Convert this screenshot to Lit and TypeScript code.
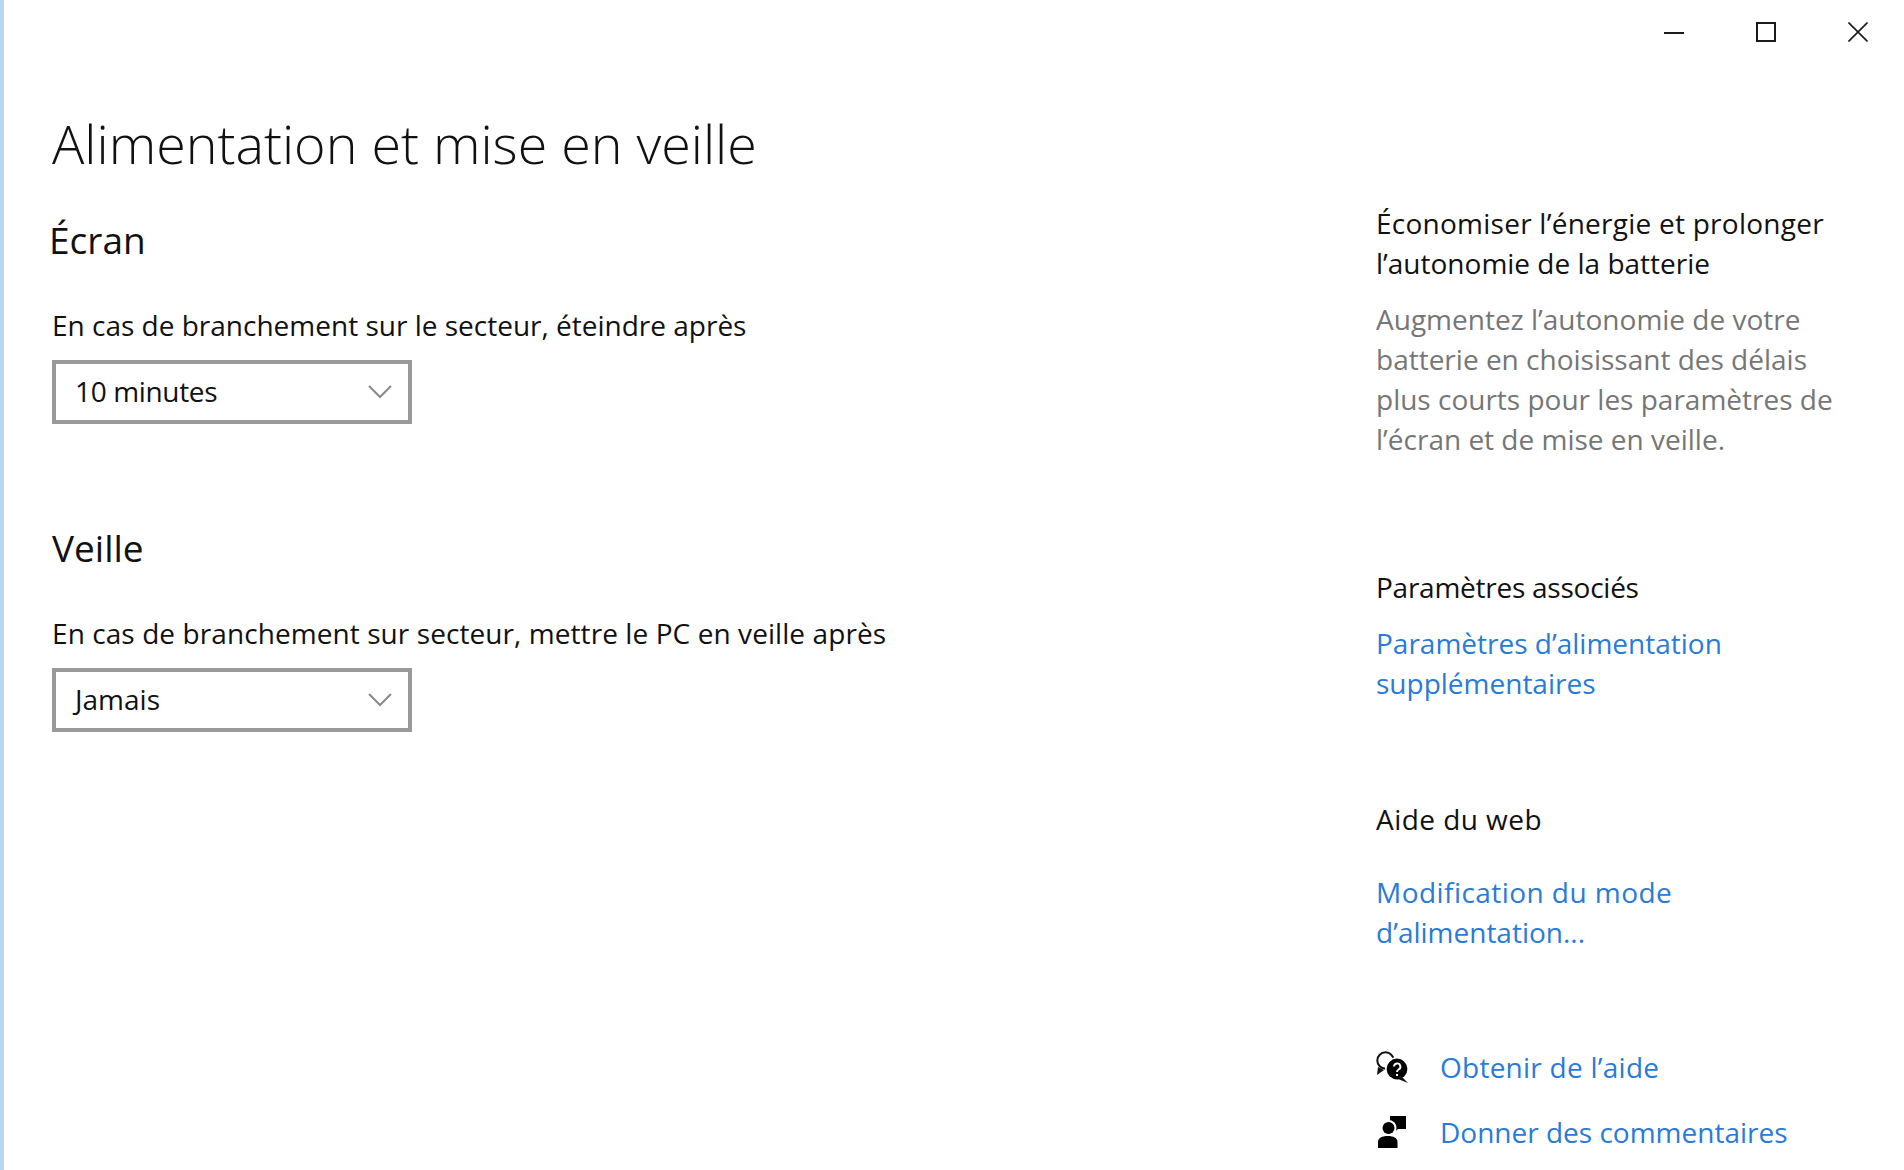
import { LitElement, html, css } from "lit";
import { customElement } from "lit/decorators.js";

@customElement("app-root")
export class AppRoot extends LitElement {
  static styles = css`
    :host {
      display: block;
      width: 1904px;
      height: 1170px;
      overflow: hidden;
      background: #fff;
      font-family: "Open Sans", "Noto Sans", sans-serif;
      color: #111;
      box-sizing: border-box;
      border-left: 4px solid #b4d6ee;
    }
    .titlebar { display: flex; justify-content: flex-end; height: 66px; }
    .winbtn { width: 92px; height: 66px; display: flex; align-items: center; justify-content: center; }
    .winbtn.up { height: 64px; }
    .winbtn svg { display: block; }
    .main { display: flex; justify-content: space-between; }
    .left { padding-left: 48px; padding-top: 41px; }
    .right { width: 528px; padding-top: 137px; box-sizing: border-box; font-size: 28px; line-height: 40px; }
    h1 { margin: 0 0 38px; font-size: 53.8px; font-weight: 300; line-height: 72px; color: #111; }
    h2 { margin: 0 0 42px; font-size: 37px; font-weight: 400; line-height: 46px; color: #111; }
    h2.ecran { margin-left: -3px; }
    h2.veille { margin-top: 101px; margin-bottom: 42px; }
    .label { font-size: 28px; line-height: 40px; margin-bottom: 15px; }
    .label.long { letter-spacing: 0.08px; }
    .select {
      width: 360px; height: 64px; box-sizing: border-box; border: 4px solid #999;
      display: flex; align-items: center; justify-content: space-between;
      padding: 0 16px 2px 19px; font-size: 28px;
    }
    .select.tight span { letter-spacing: -0.35px; }
    .select svg { display: block; margin-top: 2px; }
    .r-head { color: #111; }
    .wide { letter-spacing: 0.25px; }
    .wider { letter-spacing: 0.45px; }
    .narrow { letter-spacing: -0.25px; }
    .r-body { color: #767676; margin-top: 16px; }
    .r-sub { margin-top: 108px; }
    .link { color: #2a7bd6; }
    .links1 { margin-top: 16px; }
    .r-sub2 { margin-top: 96px; }
    .links2 { margin-top: 33px; }
    .action { display: flex; align-items: center; height: 40px; }
    .action .ico { width: 64px; flex: none; display: flex; }
    .first { margin-top: 95px; }
    .second { margin-top: 25px; }
    .ico-help { margin-left: 0; }
    .ico-fb { margin-left: 2px; }
  `;

  private select(text: string, tight = false) {
    return html`<div class="select ${tight ? "tight" : ""}"><span>${text}</span>
      <svg width="24" height="14" viewBox="0 0 24 14"><path d="M1 1 L12 12 L23 1" fill="none" stroke="#8a8a8a" stroke-width="2"/></svg>
    </div>`;
  }

  render() {
    return html`
      <div class="titlebar">
        <div class="winbtn"><svg width="20" height="20" viewBox="0 0 20 20"><path d="M0 10h20" stroke="#1a1a1a" stroke-width="2"/></svg></div>
        <div class="winbtn up"><svg width="20" height="20" viewBox="0 0 20 20"><rect x="1" y="1" width="18" height="18" fill="none" stroke="#1a1a1a" stroke-width="2"/></svg></div>
        <div class="winbtn up"><svg width="20" height="20" viewBox="0 0 20 20"><path d="M0.5 0.5L19.5 19.5M19.5 0.5L0.5 19.5" stroke="#1a1a1a" stroke-width="1.6"/></svg></div>
      </div>
      <div class="main">
        <div class="left">
          <h1>Alimentation et mise en veille</h1>
          <h2 class="ecran">Écran</h2>
          <div class="label">En cas de branchement sur le secteur, éteindre après</div>
          ${this.select("10 minutes", true)}
          <h2 class="veille">Veille</h2>
          <div class="label long">En cas de branchement sur secteur, mettre le PC en veille après</div>
          ${this.select("Jamais")}
        </div>
        <div class="right">
          <div class="r-head"><span class="wide">Économiser l’énergie et prolonger</span><br />l’autonomie de la batterie</div>
          <div class="r-body">Augmentez l’autonomie de votre<br />batterie en choisissant des délais<br />plus courts pour les paramètres de<br />l’écran et de mise en veille.</div>
          <div class="r-head r-sub narrow">Paramètres associés</div>
          <div class="link links1">Paramètres d’alimentation<br />supplémentaires</div>
          <div class="r-head r-sub2 wider">Aide du web</div>
          <div class="link links2"><span class="wider">Modification du mode</span><br />d’alimentation...</div>
          <div class="action first">
            <span class="ico"><svg class="ico-help" width="32" height="33" viewBox="0 0 32 33">
              <circle cx="9.5" cy="9.5" r="8.2" fill="none" stroke="#111" stroke-width="2"/>
              <path d="M2 16 L1 24 L8 19 Z" fill="#111"/>
              <circle cx="21" cy="18" r="12" fill="#fff"/>
              <circle cx="21" cy="18" r="10.4" fill="#000"/>
              <path d="M24 24 L32 32 L22 28 Z" fill="#111"/>
              <path d="M18 15.5 a3.2 3.2 0 1 1 4.6 3 c-1.1.6-1.6 1.2-1.6 2.5" fill="none" stroke="#fff" stroke-width="1.9"/>
              <rect x="20" y="23" width="2" height="2" fill="#fff"/>
            </svg></span>
            <span class="link wide">Obtenir de l’aide</span>
          </div>
          <div class="action second">
            <span class="ico"><svg class="ico-fb" width="28" height="32" viewBox="0 0 28 32">
              <path d="M12 0 H28 V13 H20 L15 17 V11 H12 Z" fill="#000"/>
              <circle cx="10.5" cy="12" r="8" fill="#fff"/>
              <circle cx="10.5" cy="12" r="6" fill="#000"/>
              <path d="M0 32 V26 C0 22 4 20 9.7 20 C15.5 20 19.5 22 19.5 26 V32 Z" fill="#000"/>
            </svg></span>
            <span class="link">Donner des commentaires</span>
          </div>
        </div>
      </div>
    `;
  }
}
